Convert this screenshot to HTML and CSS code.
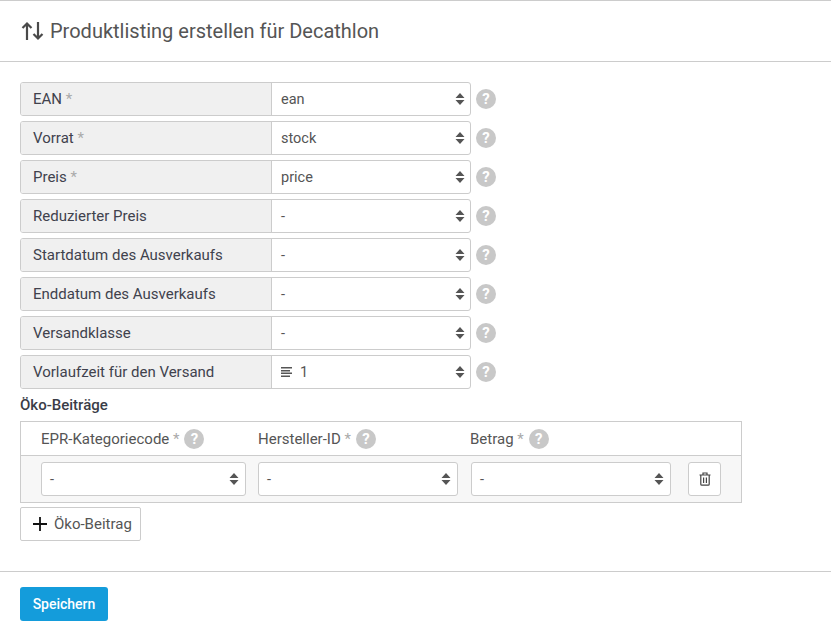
FILE: index.html
```html
<!DOCTYPE html>
<html lang="de">
<head>
<meta charset="utf-8">
<title>Produktlisting erstellen für Decathlon</title>
<link rel="stylesheet" href="styles.css">
</head>
<body>
<header class="title-bar">
  <svg class="title-icon" width="23" height="20" viewBox="0 0 23 20"><path d="M6 19V2.500M1.500 7 6 2.500 10.500 7M17 1v16.500M12.500 13 17 17.500 21.500 13" fill="none" stroke="#4a4a4a" stroke-width="2.200"/></svg>
  <h1 class="title">Produktlisting erstellen für Decathlon</h1>
</header>
<main class="form">
  <div class="rows">
    <div class="row"><div class="group"><div class="label">EAN <span class="req">*</span></div><div class="select"><span>ean</span><svg class="caret" width="10" height="14" viewBox="0 0 10 14"><path d="M5 1 9.500 6H.5zM5 13 .5 8h9z"/></svg></div></div><span class="help">?</span></div>
    <div class="row"><div class="group"><div class="label">Vorrat <span class="req">*</span></div><div class="select"><span>stock</span><svg class="caret" width="10" height="14" viewBox="0 0 10 14"><path d="M5 1 9.500 6H.5zM5 13 .5 8h9z"/></svg></div></div><span class="help">?</span></div>
    <div class="row"><div class="group"><div class="label">Preis <span class="req">*</span></div><div class="select"><span>price</span><svg class="caret" width="10" height="14" viewBox="0 0 10 14"><path d="M5 1 9.500 6H.5zM5 13 .5 8h9z"/></svg></div></div><span class="help">?</span></div>
    <div class="row"><div class="group"><div class="label">Reduzierter Preis</div><div class="select"><span>-</span><svg class="caret" width="10" height="14" viewBox="0 0 10 14"><path d="M5 1 9.500 6H.5zM5 13 .5 8h9z"/></svg></div></div><span class="help">?</span></div>
    <div class="row"><div class="group"><div class="label">Startdatum des Ausverkaufs</div><div class="select"><span>-</span><svg class="caret" width="10" height="14" viewBox="0 0 10 14"><path d="M5 1 9.500 6H.5zM5 13 .5 8h9z"/></svg></div></div><span class="help">?</span></div>
    <div class="row"><div class="group"><div class="label">Enddatum des Ausverkaufs</div><div class="select"><span>-</span><svg class="caret" width="10" height="14" viewBox="0 0 10 14"><path d="M5 1 9.500 6H.5zM5 13 .5 8h9z"/></svg></div></div><span class="help">?</span></div>
    <div class="row"><div class="group"><div class="label">Versandklasse</div><div class="select"><span>-</span><svg class="caret" width="10" height="14" viewBox="0 0 10 14"><path d="M5 1 9.500 6H.5zM5 13 .5 8h9z"/></svg></div></div><span class="help">?</span></div>
    <div class="row"><div class="group"><div class="label">Vorlaufzeit für den Versand</div><div class="select"><svg class="lines" width="12" height="10" viewBox="0 0 12 10"><path d="M0 .75h11M0 3.750h9M0 6.250h11M0 9.250h9" fill="none" stroke="#555" stroke-width="1.300"/></svg><span>1</span><svg class="caret" width="10" height="14" viewBox="0 0 10 14"><path d="M5 1 9.500 6H.5zM5 13 .5 8h9z"/></svg></div></div><span class="help">?</span></div>
  </div>
  <h2 class="section-title">Öko-Beiträge</h2>
  <div class="table">
    <div class="thead">
      <div class="th col1"><span>EPR-Kategoriecode <span class="req">*</span></span><span class="help">?</span></div>
      <div class="th col2"><span>Hersteller-ID <span class="req">*</span></span><span class="help">?</span></div>
      <div class="th col3"><span>Betrag <span class="req">*</span></span><span class="help">?</span></div>
    </div>
    <div class="tbody">
      <div class="select cell col1"><span>-</span><svg class="caret" width="10" height="14" viewBox="0 0 10 14"><path d="M5 1 9.500 6H.5zM5 13 .5 8h9z"/></svg></div>
      <div class="select cell col2"><span>-</span><svg class="caret" width="10" height="14" viewBox="0 0 10 14"><path d="M5 1 9.500 6H.5zM5 13 .5 8h9z"/></svg></div>
      <div class="select cell col3"><span>-</span><svg class="caret" width="10" height="14" viewBox="0 0 10 14"><path d="M5 1 9.500 6H.5zM5 13 .5 8h9z"/></svg></div>
      <button class="icon-btn" type="button" aria-label="Löschen"><svg width="12" height="14" viewBox="0 0 12 14"><path d="M.5 3h11M4 3V1h4v2M1.800 3v9.200c0 .6.400 1 1 1h6.400c.6 0 1-.4 1-1V3M4.600 5.500v5.500M7.400 5.500v5.500" fill="none" stroke="#444" stroke-width="1.200"/></svg></button>
    </div>
  </div>
  <button class="add-btn" type="button"><svg width="14" height="14" viewBox="0 0 14 14"><path d="M7 0v14M0 7h14" fill="none" stroke="#111" stroke-width="1.800"/></svg><span>Öko-Beitrag</span></button>
</main>
<footer class="actions">
  <button class="save" type="button">Speichern</button>
</footer>
</body>
</html>
```
FILE: styles.css
```css
* { box-sizing: border-box; }
html, body { margin: 0; padding: 0; background: #fff; }
body { font-family: Roboto, "Liberation Sans", sans-serif; font-size: 15px; color: #555; height: 634px; overflow: hidden; }

.title-bar { height: 62px; border-top: 1px solid #ccc; border-bottom: 1px solid #ccc; display: flex; align-items: center; padding-left: 21px; gap: 6px; }
.title-icon { flex: none; }
.title { margin: 0; font-size: 20px; font-weight: 400; color: #555; line-height: 24px; }

.form { padding: 20px 20px 0; }
.rows { display: flex; flex-direction: column; gap: 5px; }
.row { display: flex; align-items: center; gap: 5px; }
.group { display: flex; width: 451px; height: 34px; border: 1px solid #ccc; border-radius: 3px; background: #fff; }
.label { width: 251px; flex: none; background: #f0f0f0; border-right: 1px solid #ccc; padding-left: 12px; line-height: 32px; color: #40424d; border-radius: 2px 0 0 2px; }
.req { color: #aaa; }
.group .select { flex: 1; padding: 0 5px 0 9px; }
.select { display: flex; align-items: center; color: #555; font-size: 14.500px; }
.caret { fill: #555; margin-left: auto; flex: none; }
.lines { margin-right: 7px; flex: none; }
.help { width: 20px; height: 20px; flex: none; border-radius: 50%; background: #c8c8c8; color: #fff; font-weight: 700; font-size: 15px; display: flex; align-items: center; justify-content: center; }

.section-title { margin: 7px 0 0; font-size: 15px; line-height: 18px; font-weight: 500; color: #3a3c47; }
.table { width: 722px; margin-top: 7px; border: 1px solid #ccc; }
.thead { display: flex; height: 34px; align-items: center; border-bottom: 1px solid #ccc; }
.th { display: flex; align-items: center; color: #555; }
.th .help { margin-left: 5px; }
.th.col1 { margin-left: 20px; width: 217px; }
.th.col2 { width: 213px; }
.th.col3 { margin-left: -1px; }
.tbody { display: flex; align-items: center; height: 46px; background: #f7f7f7; }
.cell { height: 34px; background: #fff; border: 1px solid #ccc; border-radius: 3px; padding: 0 6px 0 8px; }
.cell.col1 { margin-left: 20px; width: 205px; }
.cell.col2 { margin-left: 12px; width: 200px; }
.cell.col3 { margin-left: 13px; width: 200px; }
.icon-btn { margin-left: 17px; width: 33px; height: 34px; background: #fff; border: 1px solid #ccc; border-radius: 3px; padding: 0; display: flex; align-items: center; justify-content: center; }

.add-btn { margin-top: 4px; height: 34px; width: 121px; padding: 0 0 0 12px; background: #fff; border: 1px solid #ccc; border-radius: 2px; display: flex; align-items: center; gap: 7px; font: 15px Roboto, sans-serif; color: #555; }

.actions { margin-top: 30px; border-top: 1px solid #ccc; padding: 15px 20px 0; }
.save { width: 88px; height: 34px; background: #149cdb; border: 0; border-radius: 3px; color: #fff; font: 500 14px Roboto, sans-serif; padding: 0; }
```
